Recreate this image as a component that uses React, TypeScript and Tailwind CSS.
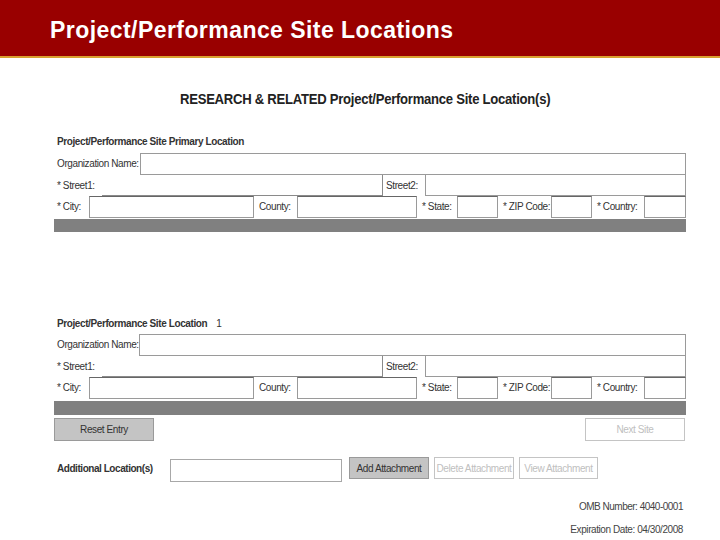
const font = "[font-family:'Liberation_Sans',Arial,sans-serif]";

function Label({ w, children, pl = "pl-[3px]" }: { w: string; children: React.ReactNode; pl?: string }) {
  return <div className={`${w} ${pl} shrink-0 whitespace-nowrap text-[10px] tracking-[-0.4px] leading-none text-[#333]`}>{children}</div>;
}

function Box({ w, className = "" }: { w: string; className?: string }) {
  return <div className={`${w} h-full shrink-0 bg-white border border-[#9a9a9a] ${className}`} />;
}

function Block({ title, extra, orgW, orgLabel, headGap, barGap, barH }: { title: string; extra?: string; orgW: string; orgLabel: string; headGap: string; barGap: string; barH: string }) {
  return (
    <section>
      <div className="flex items-center h-[12px] pl-[3px] whitespace-nowrap text-[10px] font-bold tracking-[-0.4px] text-[#333]">
        <span>{title}</span>
        {extra ? <span className="ml-[9px] font-normal">{extra}</span> : null}
      </div>
      <div className={`flex items-center ${headGap} h-[22px]`}>
        <Label w={orgLabel}>Organization Name:</Label>
        <Box w={orgW} />
      </div>
      <div className="flex items-center h-[21px]">
        <Label w="w-[48px]">* Street1:</Label>
        <div className="w-[281px] h-full shrink-0 bg-white border-b border-r border-[#8a8a8a]" />
        <Label w="w-[42px]">Street2:</Label>
        <div className="w-[261px] h-full shrink-0 bg-white border-l border-r border-b border-[#9a9a9a]" />
      </div>
      <div className="flex items-center h-[22px]">
        <Label w="w-[35px]">* City:</Label>
        <Box w="w-[165px]" className="border-t-[#666]" />
        <Label w="w-[43px]" pl="pl-[5px]">County:</Label>
        <Box w="w-[120px]" className="border-t-[#666]" />
        <Label w="w-[40px]" pl="pl-[5px]">* State:</Label>
        <Box w="w-[41px]" className="border-t-[#666]" />
        <Label w="w-[53px]" pl="pl-[5px]">* ZIP Code:</Label>
        <Box w="w-[41px]" className="border-t-[#666]" />
        <Label w="w-[52px]" pl="pl-[5px]">* Country:</Label>
        <Box w="w-[42px]" className="border-t-[#666]" />
      </div>
      <div className={`${barH} ${barGap} bg-[#808080]`} />
    </section>
  );
}

function Btn({ w, h, active, children }: { w: string; h: string; active?: boolean; children: React.ReactNode }) {
  return (
    <div className={`${w} ${h} shrink-0 flex items-center justify-center whitespace-nowrap text-[10px] tracking-[-0.4px] border ${active ? "bg-[#c4c4c4] border-[#9a9a9a] text-[#333]" : "bg-white border-[#c4c4c4] text-[#c0c0c0]"}`}>
      {children}
    </div>
  );
}

export default function App() {
  return (
    <div className={`w-[720px] h-[540px] overflow-hidden bg-white ${font}`}>
      <header className="h-[58px] bg-[#990000] border-b-2 border-[#d8a030] flex items-center pl-[50px] pt-[5px]">
        <h1 className="text-[23px] font-bold tracking-[0.44px] text-white whitespace-nowrap">Project/Performance Site Locations</h1>
      </header>
      <main className="pl-[54px] w-[686px]">
        <h2 className="mt-[32px] ml-[126px] w-max origin-left scale-x-[0.873] text-[15px] font-bold leading-[17px] tracking-[-0.3px] text-[#222] whitespace-nowrap">
          RESEARCH &amp; RELATED Project/Performance Site Location(s)
        </h2>
        <div className="mt-[28px]">
          <Block title="Project/Performance Site Primary Location" orgLabel="w-[86px]" orgW="w-[546px]" headGap="mt-[6px]" barGap="mt-[1px]" barH="h-[13px]" />
        </div>
        <div className="mt-[85px]">
          <Block title="Project/Performance Site Location" extra="1" orgLabel="w-[85px]" orgW="w-[547px]" headGap="mt-[5px]" barGap="mt-[2px]" barH="h-[14px]" />
        </div>
        <div className="flex justify-between mt-[3px] pr-[1px]">
          <Btn w="w-[100px]" h="h-[23px]" active>Reset Entry</Btn>
          <Btn w="w-[100px]" h="h-[23px]">Next Site</Btn>
        </div>
        <div className="flex items-start mt-[16px]">
          <div className="w-[116px] shrink-0 pl-[3px] pt-[6px] whitespace-nowrap text-[10px] font-bold tracking-[-0.45px] leading-[12px] text-[#333]">Additional Location(s)</div>
          <div className="w-[172px] h-[23px] mt-[2px] shrink-0 bg-white border border-[#a8a8a8]" />
          <div className="flex gap-[5px] ml-[7px]">
            <Btn w="w-[80px]" h="h-[22px]" active>Add Attachment</Btn>
            <Btn w="w-[80px]" h="h-[22px]">Delete Attachment</Btn>
            <Btn w="w-[79px]" h="h-[22px]">View Attachment</Btn>
          </div>
        </div>
        <div className="mt-[19px] pr-[3px] text-right whitespace-nowrap text-[10px] tracking-[-0.5px] text-[#444] leading-[12px]">OMB Number: 4040-0001</div>
        <div className="mt-[11px] pr-[3px] text-right whitespace-nowrap text-[10px] tracking-[-0.42px] text-[#444] leading-[12px]">Expiration Date: 04/30/2008</div>
      </main>
    </div>
  );
}
